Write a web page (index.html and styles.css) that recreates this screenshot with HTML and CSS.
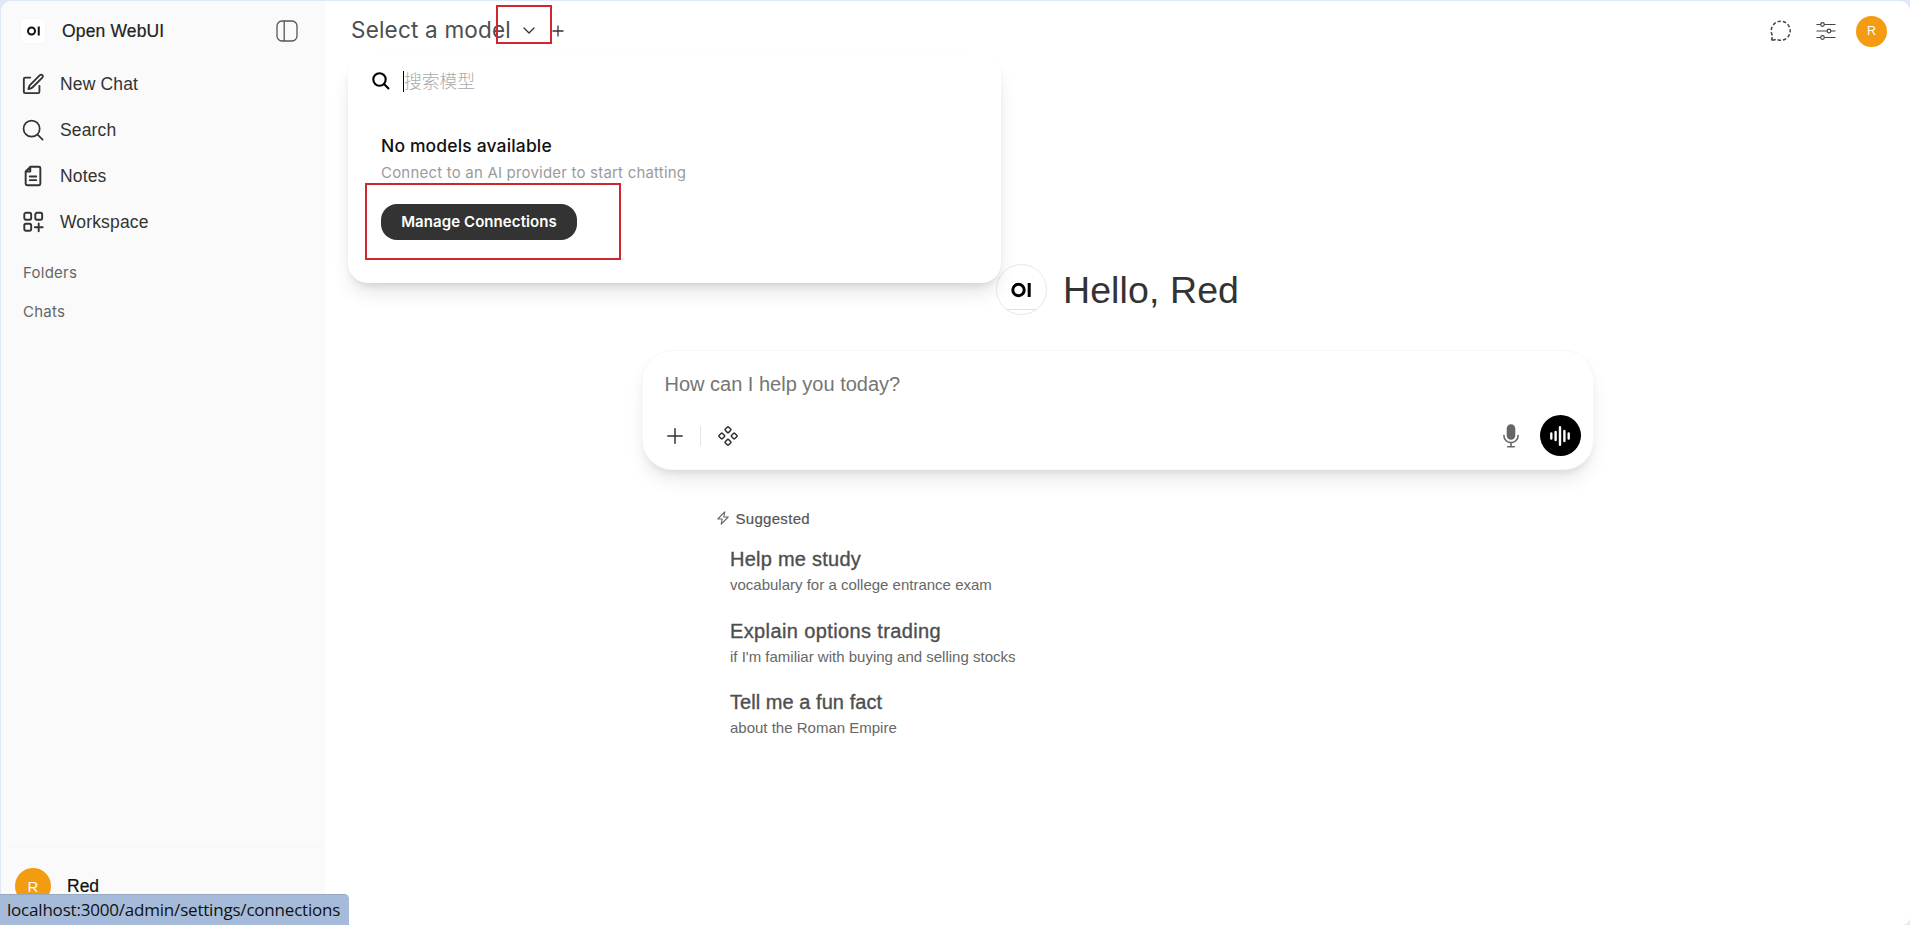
FILE: index.html
```html
<!DOCTYPE html>
<html lang="en">
<head>
    <meta charset="UTF-8">
    <meta name="viewport" content="width=device-width, initial-scale=1.0">
    <title>Open WebUI</title>
    <link rel="stylesheet" href="styles.css">
</head>
<body>
    <div class="app">
        <aside class="sidebar">
            <div class="sidebar-header">
                <div class="logo">
                    <svg width="13" height="10" viewBox="0 0 26 20" fill="none" stroke="#111" stroke-width="4"><circle cx="9" cy="10" r="7"/><path d="M23.500 1v18"/></svg>
                </div>
                <span class="brand">Open WebUI</span>
                <svg class="toggle" width="22" height="22" viewBox="0 0 22 22" fill="none" stroke="#555" stroke-width="1.300"><rect x="1" y="1" width="20" height="20" rx="5"/><path d="M8.200 1v20"/></svg>
            </div>
            <nav class="menu">
                <a class="menu-item" href="#">
                    <svg width="22" height="22" viewBox="0 0 24 24" fill="none" stroke="currentColor" stroke-width="2" stroke-linecap="round" stroke-linejoin="round"><path d="m16.862 4.487 1.687-1.688a1.875 1.875 0 1 1 2.652 2.652L10.582 16.070a4.500 4.500 0 0 1-1.897 1.130L6 18l.8-2.685a4.500 4.500 0 0 1 1.130-1.897l8.932-8.931Z" transform="translate(1 -.5)"/><path d="M19 14v6.500a1.500 1.500 0 0 1-1.500 1.500H3.500A1.500 1.500 0 0 1 2 20.500V6.500A1.500 1.500 0 0 1 3.500 5H9"/></svg>
                    <span>New Chat</span>
                </a>
                <a class="menu-item" href="#">
                    <svg width="22" height="22" viewBox="0 0 24 24" fill="none" stroke="currentColor" stroke-width="1.900" stroke-linecap="round"><circle cx="10.500" cy="10.500" r="8.800"/><path d="m17 17 5.500 5.500"/></svg>
                    <span>Search</span>
                </a>
                <a class="menu-item" href="#">
                    <svg width="22" height="22" viewBox="0 0 24 24" fill="none" stroke="currentColor" stroke-width="2.100" stroke-linecap="round" stroke-linejoin="round"><path d="M9 2h9.500A1.500 1.500 0 0 1 20 3.500v17a1.500 1.500 0 0 1-1.500 1.500h-13A1.500 1.500 0 0 1 4 20.500V7l5-5v5H4M8.500 12.500h7M8.500 16.500h7"/></svg>
                    <span>Notes</span>
                </a>
                <a class="menu-item" href="#">
                    <svg width="22" height="22" viewBox="0 0 24 24" fill="none" stroke="currentColor" stroke-width="2.100" stroke-linecap="round"><rect x="2.500" y="2" width="7.500" height="7.500" rx="1.800"/><rect x="14.500" y="2" width="7.500" height="7.500" rx="1.800"/><rect x="2.500" y="14" width="7.500" height="7.500" rx="1.800"/><path d="M18.200 13.500v8.500M14 17.700h8.500"/></svg>
                    <span>Workspace</span>
                </a>
            </nav>
            <div class="section">Folders</div>
            <div class="section">Chats</div>
            <div class="user">
                <div class="avatar avatar-lg">R</div>
                <span class="user-name">Red</span>
            </div>
        </aside>

        <main class="main">
            <header class="topbar">
                <span class="model-name">Select a model</span>
                <svg class="chevron" width="12" height="8" viewBox="0 0 12 8" fill="none" stroke="#333" stroke-width="1.300" stroke-linecap="round" stroke-linejoin="round"><path d="m1 1 5 5 5-5"/></svg>
                <svg class="add-model" width="12" height="12" viewBox="0 0 12 12" fill="none" stroke="#333" stroke-width="1.300"><path d="M6 .5v11M.5 6h11"/></svg>
                <div class="top-actions">
                    <svg width="22" height="22" viewBox="0 0 22 22" fill="none" stroke="#444" stroke-width="1.500" stroke-dasharray="3.400 2"><path d="M1.600 20.500 2.600 15.800A9.500 9.500 0 1 1 6.600 19.400Z"/></svg>
                    <svg width="20" height="18" viewBox="0 0 20 18" fill="none" stroke="#444" stroke-width="1.200"><path d="M.5 2.500h4M8.500 2.500h11M.5 9h10.500M15 9h4.500M.5 15.500h4M8.500 15.500h11"/><circle cx="6.500" cy="2.500" r="1.800"/><circle cx="13" cy="9" r="1.800"/><circle cx="6.500" cy="15.500" r="1.800"/></svg>
                    <div class="avatar">R</div>
                </div>
            </header>

            <div class="greeting">
                <div class="greeting-logo">
                    <svg width="20" height="16" viewBox="0 0 20 16" fill="none" stroke="#000" stroke-width="3"><circle cx="7.500" cy="8" r="5.700"/><path d="M18.200 1v14"/></svg>
                </div>
                <h1>Hello, Red</h1>
            </div>

            <div class="prompt">
                <div class="prompt-text">How can I help you today?</div>
                <div class="prompt-tools">
                    <svg width="16" height="16" viewBox="0 0 16 16" fill="none" stroke="#333" stroke-width="1.500" stroke-linecap="round"><path d="M8 .8v14.400M.8 8h14.400"/></svg>
                    <span class="divider"></span>
                    <svg width="20" height="20" viewBox="0 0 20 20" fill="none" stroke="#333" stroke-width="1.500" stroke-linejoin="round"><rect x="7.700" y="1.500" width="4.600" height="4.600" rx="1" transform="rotate(45 10 3.800)"/><rect x="7.700" y="13.900" width="4.600" height="4.600" rx="1" transform="rotate(45 10 16.200)"/><rect x="1.500" y="7.700" width="4.600" height="4.600" rx="1" transform="rotate(45 3.800 10)"/><rect x="13.900" y="7.700" width="4.600" height="4.600" rx="1" transform="rotate(45 16.200 10)"/></svg>
                    <svg class="mic" width="16" height="24" viewBox="0 0 16 24" fill="none" stroke="#666" stroke-width="1.600" stroke-linecap="round"><rect x="4.500" y="1" width="7" height="14" rx="3.500" fill="#666"/><path d="M.9 11.500a7.100 7.100 0 0 0 14.200 0M8 18.600v4M4.700 22.800h6.600"/></svg>
                    <button class="voice">
                        <svg width="20" height="20" viewBox="0 0 20 20" stroke="#fff" stroke-width="2.400" stroke-linecap="round"><path d="M1.300 7.500v5M5.600 6v8M10 1.300v17.400M14.400 5v10M18.700 7.500v5"/></svg>
                    </button>
                </div>
            </div>

            <div class="suggestions">
                <div class="suggested">
                    <svg width="12" height="14" viewBox="0 0 12 14" fill="none" stroke="#666" stroke-width="1.100" stroke-linejoin="round"><path d="M7.800.8.800 8h4.400L4.200 13.200 11.200 6H6.800Z"/></svg>
                    <span>Suggested</span>
                </div>
                <div class="suggestion">
                    <div class="title">Help me study</div>
                    <div class="sub">vocabulary for a college entrance exam</div>
                </div>
                <div class="suggestion">
                    <div class="title title-wide">Explain options trading</div>
                    <div class="sub">if I'm familiar with buying and selling stocks</div>
                </div>
                <div class="suggestion">
                    <div class="title title-tight">Tell me a fun fact</div>
                    <div class="sub">about the Roman Empire</div>
                </div>
            </div>
        </main>
    </div>

    <div class="dropdown">
        <div class="search-row">
            <svg width="18" height="18" viewBox="0 0 18 18" fill="none" stroke="#000" stroke-width="2.100"><circle cx="7.500" cy="7.500" r="6.200"/><path d="m12 12 5 5"/></svg>
            <span class="caret"></span>
            <span class="placeholder">搜索模型</span>
        </div>
        <div class="empty-title">No models available</div>
        <div class="empty-sub">Connect to an AI provider to start chatting</div>
        <button class="manage">Manage Connections</button>
    </div>

    <div class="mark mark-chevron"></div>
    <div class="mark mark-manage"></div>

    <div class="statusbar">localhost:3000/admin/settings/connections</div>
</body>
</html>
```
FILE: styles.css
```css
* {
    box-sizing: border-box;
}
body {
    margin: 0;
    height: 925px;
    overflow: hidden;
    background-color: #dfe8f6;
    font-family: "Liberation Sans", Arial, sans-serif;
    white-space: nowrap;
}
svg {
    display: block;
    flex: none;
}
.app {
    display: flex;
    height: 924px;
    margin: 1px 0 0 1px;
    border-radius: 10px 10px 8px 0;
    overflow: hidden;
    background-color: #fff;
}

/* sidebar */
.sidebar {
    width: 324px;
    display: flex;
    flex-direction: column;
    background-color: #fafafa;
    color: #333;
}
.sidebar-header {
    display: flex;
    align-items: center;
    height: 60px;
    padding: 0 27px 0 20px;
}
.logo {
    display: flex;
    align-items: center;
    justify-content: center;
    width: 24px;
    height: 24px;
    border-radius: 5px;
    background-color: #fff;
    box-shadow: 0 0 2px rgba(0, 0, 0, 0.06);
}
.brand {
    margin-left: 17px;
    font-size: 17.5px;
    letter-spacing: 0.15px;
    color: #222;
    -webkit-text-stroke: 0.2px #222;
}
.toggle {
    margin-left: auto;
}
.menu-item {
    display: flex;
    align-items: center;
    gap: 16px;
    height: 46px;
    padding-left: 21px;
    font-size: 17.5px;
    letter-spacing: 0.15px;
    color: #333;
    text-decoration: none;
}
.section {
    height: 39px;
    padding: 19px 0 0 22px;
    line-height: 18px;
    font-family: Inter, sans-serif;
    font-size: 15px;
    letter-spacing: 0.25px;
    color: #666;
}
.user {
    display: flex;
    align-items: center;
    gap: 16px;
    margin-top: auto;
    height: 79px;
    padding-left: 14px;
    border-top: 1px solid #f7f7f7;
}
.user-name {
    font-size: 17.5px;
    color: #111;
    -webkit-text-stroke: 0.2px #111;
}
.avatar {
    display: flex;
    align-items: center;
    justify-content: center;
    width: 31px;
    height: 31px;
    border-radius: 50%;
    background-color: #f39c12;
    color: #fff;
    font-size: 12.5px;
}
.avatar-lg {
    width: 36px;
    height: 36px;
    font-size: 15px;
}

/* main area */
.main {
    flex: 1;
    display: flex;
    flex-direction: column;
    align-items: center;
}
.topbar {
    display: flex;
    align-items: center;
    align-self: stretch;
    height: 60px;
    padding: 0 23px 0 26px;
}
.model-name {
    margin-top: -3px;
    font-family: Inter, sans-serif;
    font-size: 22.5px;
    letter-spacing: 0.2px;
    color: #4e4e4e;
}
.chevron {
    margin-left: 12px;
}
.add-model {
    margin-left: 17px;
}
.top-actions {
    display: flex;
    align-items: center;
    gap: 24px;
    margin-left: auto;
}
.top-actions .avatar {
    margin-left: -4px;
}
.greeting {
    display: flex;
    align-items: center;
    gap: 16px;
    margin-top: 203px;
    height: 51px;
}
.greeting-logo {
    display: flex;
    align-items: center;
    justify-content: center;
    width: 51px;
    height: 51px;
    border: 1px solid #e8e8e8;
    border-radius: 50%;
    background: linear-gradient(#fff 44px, #e0e0e0 44px, #e0e0e0 45px, #fff 45px);
}
.greeting h1 {
    margin: 2px 0 0;
    font-size: 37.5px;
    font-weight: 400;
    letter-spacing: 0.1px;
    color: #333;
}
.prompt {
    width: 952px;
    height: 120px;
    margin-top: 35px;
    padding: 21px 12px 0 22px;
    border: 1px solid #f8f8f8;
    border-radius: 30px;
    background-color: #fff;
    box-shadow: 0 12px 20px -4px rgba(0, 0, 0, 0.1), 0 5px 8px -4px rgba(0, 0, 0, 0.1);
}
.prompt-text {
    height: 24px;
    line-height: 24px;
    font-size: 20px;
    color: #757575;
}
.prompt-tools {
    display: flex;
    align-items: center;
    height: 41px;
    margin-top: 19px;
    padding-left: 2px;
}
.divider {
    width: 1px;
    height: 20px;
    margin: 0 17px;
    background-color: #e3e3e3;
}
.mic {
    margin-left: auto;
}
.voice {
    display: flex;
    align-items: center;
    justify-content: center;
    width: 41px;
    height: 41px;
    margin-left: 21px;
    padding: 0;
    border: none;
    border-radius: 50%;
    background-color: #000;
}
.suggestions {
    width: 802px;
    margin-top: 38px;
}
.suggested {
    display: flex;
    align-items: center;
    gap: 7px;
    height: 20px;
    margin-bottom: 18px;
    font-size: 15px;
    letter-spacing: 0.3px;
    color: #555;
    -webkit-text-stroke: 0.2px #555;
}
.suggestion {
    height: 71.5px;
    padding-left: 13.5px;
}
.title {
    height: 26px;
    line-height: 26px;
    font-size: 20px;
    letter-spacing: 0.25px;
    color: #4e4e4e;
    -webkit-text-stroke: 0.35px #4e4e4e;
}
.title-wide {
    letter-spacing: 0.38px;
}
.title-tight {
    letter-spacing: 0.05px;
}
.sub {
    height: 24px;
    line-height: 25px;
    font-size: 15px;
    color: #676767;
}

/* model picker */
.dropdown {
    position: absolute;
    left: 348px;
    top: 56px;
    width: 653px;
    height: 227px;
    padding: 14px 24px 0;
    border-radius: 20px;
    background-color: #fff;
    box-shadow: 0 12px 20px -4px rgba(0, 0, 0, 0.12), 0 5px 8px -4px rgba(0, 0, 0, 0.12);
    font-family: Inter, sans-serif;
}
.search-row {
    display: flex;
    align-items: center;
    height: 22px;
}
.caret {
    width: 1px;
    height: 21px;
    margin-left: 13px;
    background-color: #000;
}
.placeholder {
    margin-top: -3px;
    font-family: "Noto Sans CJK SC", sans-serif;
    font-size: 17.8px;
    font-weight: 300;
    color: #aaa;
}
.empty-title {
    margin: 42px 0 0 9px;
    line-height: 24px;
    font-size: 17.5px;
    font-weight: 500;
    letter-spacing: 0.15px;
    color: #111;
}
.empty-sub {
    margin: 4px 0 0 9px;
    line-height: 22px;
    font-size: 15px;
    letter-spacing: 0.2px;
    color: #9b9b9b;
}
.manage {
    display: block;
    width: 196px;
    height: 36px;
    margin: 20px 0 0 9px;
    padding: 0 0 1px;
    border: none;
    border-radius: 16px;
    background-color: #333;
    color: #fff;
    font-family: Inter, sans-serif;
    font-size: 15px;
    font-weight: 600;
    letter-spacing: 0.08px;
}

/* red highlight boxes */
.mark {
    position: absolute;
    border: 2px solid #d0272f;
}
.mark-chevron {
    left: 496px;
    top: 5px;
    width: 56px;
    height: 39px;
}
.mark-manage {
    left: 365px;
    top: 183px;
    width: 256px;
    height: 77px;
}

/* browser link preview */
.statusbar {
    position: absolute;
    left: 0;
    bottom: 0;
    width: 349px;
    height: 31px;
    padding-left: 7px;
    line-height: 29px;
    border-top: 1px solid #97a9c0;
    border-radius: 0 5px 0 0;
    background-color: #a5bbd9;
    color: #111;
    font-family: "Open Sans", sans-serif;
    font-size: 17px;
    letter-spacing: -0.2px;
}
```
